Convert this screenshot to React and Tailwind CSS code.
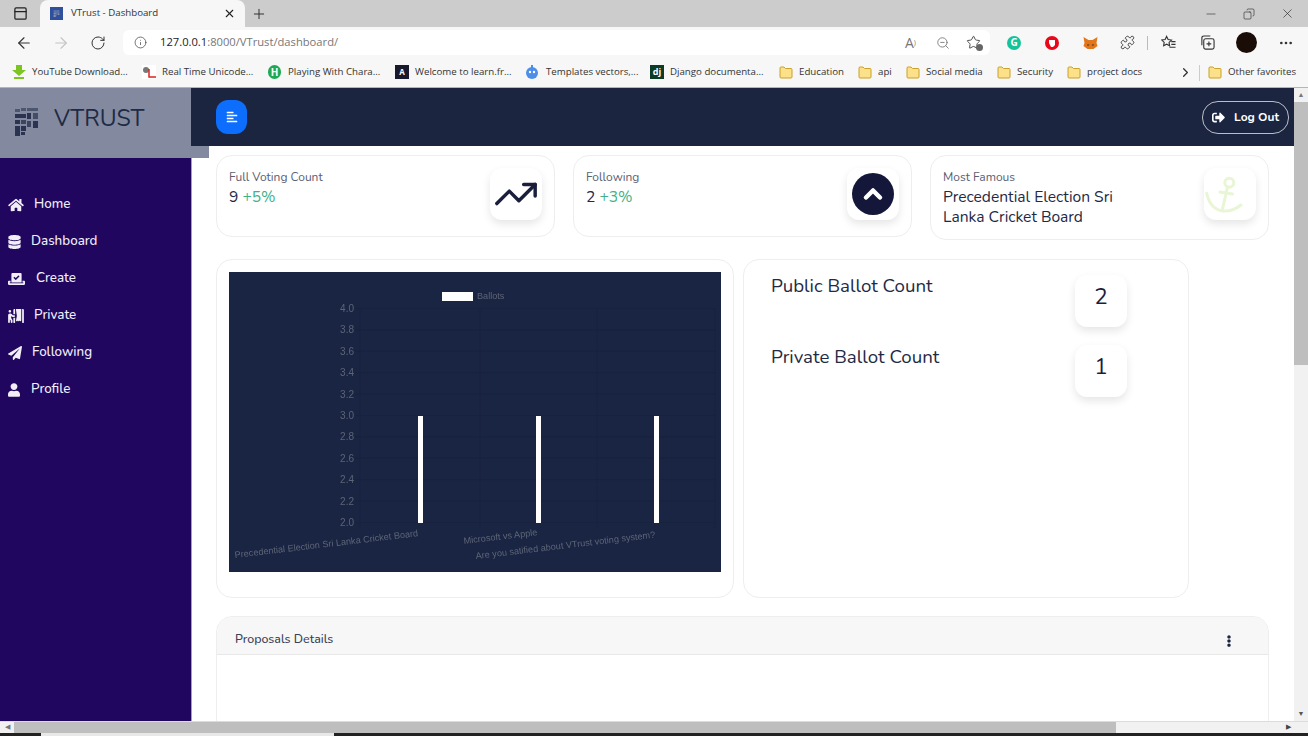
import { ArrowLeft, ArrowRight, RotateCw, Info, ZoomOut, Star, Puzzle, Ellipsis, Minus, Copy, X, Plus, ChevronRight, PanelTop, TrendingUp } from "lucide-react"
import { FaHome, FaDatabase, FaVoteYea, FaPersonBooth, FaPaperPlane, FaUser, FaSignOutAlt, FaEllipsisV, FaAlignLeft } from "react-icons/fa"

function Logo({ className }) {
    return <svg viewBox="0 0 23 28" className={className} fill="#2a3350">
        <rect x="0" y="1" width="5" height="3" opacity=".6" />
        <rect x="6" y="0" width="5" height="3" opacity=".6" />
        <rect x="12" y="0" width="11" height="3" opacity=".6" />
        <rect x="0" y="6" width="11" height="4" />
        <rect x="12" y="5" width="4" height="6" />
        <rect x="18" y="5" width="5" height="6" opacity=".7" />
        <rect x="0" y="12" width="5" height="4" />
        <rect x="6" y="12" width="5" height="4" opacity=".8" />
        <rect x="12" y="13" width="4" height="6" opacity=".8" />
        <rect x="18" y="13" width="5" height="7" />
        <rect x="0" y="18" width="5" height="10" />
        <rect x="6" y="18" width="5" height="5" />
        <rect x="6" y="24" width="4" height="3" />
    </svg>
}

function Folder() {
    return <svg viewBox="0 0 14 14" className="w-[14px] h-[14px] shrink-0">
        <path d="M1 3a1 1 0 0 1 1-1h3l1.5 1.5H12a1 1 0 0 1 1 1V12a1 1 0 0 1-1 1H2a1 1 0 0 1-1-1z" fill="#fce08a" stroke="#c9a227" />
    </svg>
}

function Bookmarks() {
    const text = "text-[9.7px] text-[#333] whitespace-nowrap"
    return <div className="h-[30px] bg-[#f7f7f7] flex items-center pl-[12px] relative border-b border-[#b5b5b5] font-['Open_Sans',sans-serif]">
        <div className="w-[130px] flex items-center gap-[6px]">
            <svg viewBox="0 0 14 14" className="w-[14px] h-[14px] shrink-0"><path d="M4 0h6v5h4l-7 6-7-6h4z" fill="#7cc521" /><rect x="2" y="12" width="10" height="2" fill="#7cc521" /></svg>
            <span className={text}>YouTube Download...</span>
        </div>
        <div className="w-[126px] flex items-center gap-[6px]">
            <svg viewBox="0 0 14 14" className="w-[14px] h-[14px] shrink-0"><rect width="14" height="14" fill="#fff" /><circle cx="4" cy="5" r="3" fill="#777" /><path d="M7 4v8h7" stroke="#d22" strokeWidth="1.5" fill="none" /></svg>
            <span className={text}>Real Time Unicode...</span>
        </div>
        <div className="w-[127px] flex items-center gap-[7px]">
            <span className="w-[13px] h-[14px] shrink-0 rounded-full bg-[#1fa855] text-white text-[10px] font-bold leading-[14px] text-center">H</span>
            <span className={text}>Playing With Chara...</span>
        </div>
        <div className="w-[130px] flex items-center gap-[6px]">
            <span className="w-[14px] h-[14px] shrink-0 bg-[#1a1a2e] text-white text-[8px] font-bold leading-[14px] text-center">A</span>
            <span className={text}>Welcome to learn.fr...</span>
        </div>
        <div className="w-[125px] flex items-center gap-[7px]">
            <svg viewBox="0 0 14 14" className="w-[14px] h-[14px] shrink-0"><circle cx="7" cy="8" r="6" fill="#4c8ee8" /><rect x="6" y="0" width="2" height="3" fill="#4c8ee8" /><circle cx="5" cy="7" r="1.2" fill="#fff" /><circle cx="9" cy="7" r="1.2" fill="#fff" /></svg>
            <span className={text}>Templates vectors,...</span>
        </div>
        <div className="w-[129px] flex items-center gap-[6px]">
            <span className="w-[14px] h-[14px] shrink-0 bg-[#0c3c26] text-white text-[9px] font-bold leading-[13px] text-center">dj</span>
            <span className={text}>Django documenta...</span>
        </div>
        <div className="w-[79px] flex items-center gap-[6px]"><Folder /><span className={text}>Education</span></div>
        <div className="w-[48px] flex items-center gap-[6px]"><Folder /><span className={text}>api</span></div>
        <div className="w-[91px] flex items-center gap-[6px]"><Folder /><span className={text}>Social media</span></div>
        <div className="w-[70px] flex items-center gap-[6px]"><Folder /><span className={text}>Security</span></div>
        <div className="w-[111px] flex items-center gap-[6px]"><Folder /><span className={text}>project docs</span></div>
        <ChevronRight className="w-[15px] h-[15px] text-[#333]" />
        <div className="w-px h-[16px] bg-[#ccc] ml-[6px] mr-[8px]" />
        <div className="flex items-center gap-[6px]"><Folder /><span className={text}>Other favorites</span></div>
    </div>
}

function BrowserChrome() {
    return <div className="shrink-0">
        <div className="h-[27px] bg-[#cccccc] flex items-end">
            <div className="w-[40px] h-[27px] flex items-center justify-center">
                <PanelTop className="w-[15px] h-[15px] text-[#222]" />
            </div>
            <div className="w-[205px] h-[27px] bg-[#f7f7f7] rounded-t-lg flex items-center pl-[10px] pr-[9px] font-['Open_Sans',sans-serif]">
                <span className="w-[13px] h-[13px] bg-[#2f4f9f] shrink-0 p-[3px]"><Logo className="w-full h-full opacity-60 invert" /></span>
                <span className="ml-[8px] text-[9.700px] text-[#333] flex-1">VTrust - Dashboard</span>
                <X className="w-[13px] h-[13px] text-[#222]" />
            </div>
            <div className="h-[27px] w-[28px] flex items-center justify-center">
                <Plus className="w-[16px] h-[16px] text-[#333]" strokeWidth={1.5} />
            </div>
            <div className="flex-1" />
            <div className="h-[27px] flex items-center text-[#222] pr-[13px] gap-[25px]">
                <Minus className="w-[14px] h-[14px]" strokeWidth={1} />
                <Copy className="w-[12px] h-[12px] -scale-x-100" strokeWidth={1.2} />
                <X className="w-[15px] h-[15px]" strokeWidth={1} />
            </div>
        </div>
        <div className="h-[31px] bg-[#f7f7f7] flex items-center pl-[15px]">
            <ArrowLeft className="w-[18px] h-[18px] text-[#333]" strokeWidth={1.5} />
            <ArrowRight className="w-[18px] h-[18px] text-[#c4c4c4] ml-[19px]" strokeWidth={1.5} />
            <RotateCw className="w-[16px] h-[16px] text-[#333] ml-[20px]" strokeWidth={1.5} />
            <div className="ml-[17px] w-[867px] h-[25px] bg-white rounded-md flex items-center pl-[11px] pr-[9px] font-['Open_Sans',sans-serif]">
                <Info className="w-[13px] h-[13px] text-[#555]" strokeWidth={1.5} />
                <span className="ml-[13px] text-[11.200px] text-[#777] flex-1"><span className="text-[#222]">127.0.0.1</span>:8000/VTrust/dashboard/</span>
                <span className="text-[14px] leading-[16px] text-[#777] w-[16px] whitespace-nowrap">A<span className="text-[7px] align-top">)</span></span>
                <ZoomOut className="w-[14px] h-[14px] text-[#777] ml-[15px]" strokeWidth={1.5} />
                <span className="relative ml-[16px]">
                    <Star className="w-[15px] h-[15px] text-[#444]" strokeWidth={1.5} />
                    <span className="absolute right-[-2px] bottom-[-1px] w-[7px] h-[7px] rounded-full bg-[#666]" />
                </span>
            </div>
            <div className="ml-[17px] w-[14px] h-[14px] rounded-full bg-[#15c39a] flex items-center justify-center text-white text-[10px] font-bold font-['Open_Sans',sans-serif]">G</div>
            <svg viewBox="0 0 14 14" className="ml-[24px] w-[14px] h-[14px]"><circle cx="7" cy="7" r="7" fill="#e8081a" /><path d="M4 7V4h6v5l-2 2H6z" fill="#fff" /></svg>
            <svg viewBox="0 0 14 14" className="ml-[24px] w-[15px] h-[14px]"><path d="M0 1l5 3h4l5-3-1 6 1 3-4 3H4l-4-3 1-3z" fill="#e2761b" /><path d="M4 8l2 1-2 1zM10 8L8 9l2 1z" fill="#333" /></svg>
            <Puzzle className="ml-[22px] w-[15px] h-[15px] text-[#333]" strokeWidth={1.5} />
            <div className="ml-[12px] w-px h-[14px] bg-[#bbb]" />
            <svg viewBox="0 0 16 16" className="ml-[13px] w-[15px] h-[15px]" fill="none" stroke="#333" strokeWidth="1.200"><path d="M6 1.500l1.600 3.400 3.600.5-2.600 2.500.6 3.600L6 9.800l-3.200 1.700.6-3.600L.8 5.400l3.600-.5zM11 7h4.500M11 10h4.500M9 13h6.500" /></svg>
            <svg viewBox="0 0 16 16" className="ml-[24px] w-[15px] h-[15px]" fill="none" stroke="#333" strokeWidth="1.2"><rect x="4" y="4" width="11" height="11" rx="2" /><path d="M2 11V3a2 2 0 0 1 2-2h7M9.500 7v5M7 9.500h5" /></svg>
            <div className="ml-[21px] w-[21px] h-[21px] rounded-full bg-[#1a0d08]" />
            <Ellipsis className="ml-[21px] w-[16px] h-[16px] text-[#333]" />
        </div>
        <Bookmarks />
    </div>
}

function NavItem({ icon, label, textClass }) {
    return <div className="h-[37px] pl-[8px] flex items-center text-[#f1eef8] text-[13.400px] font-medium">
        {icon}
        <span className={textClass}>{label}</span>
    </div>
}

function Sidebar() {
    return <div className="w-[191px] shrink-0 bg-[#20065f] shadow-[1px_0_0_#a79bc5]">
        <div className="w-[209px] h-[70px] bg-[#838a9f] flex items-start pl-[15px] pt-[20px]">
            <Logo className="w-[23px] h-[28px]" />
            <span className="ml-[16px] text-[23.200px] leading-[20px] mt-[1px] text-[#1f2a45]">VTRUST</span>
        </div>
        <div className="pt-[28px]">
            <NavItem icon={<FaHome className="w-[16px] h-[14px]" />} label="Home" textClass="ml-[10px]" />
            <NavItem icon={<FaDatabase className="w-[13px] h-[14px]" />} label="Dashboard" textClass="ml-[10px]" />
            <NavItem icon={<FaVoteYea className="w-[17px] h-[14px]" />} label="Create" textClass="ml-[11px]" />
            <NavItem icon={<FaPersonBooth className="w-[16px] h-[14px]" />} label="Private" textClass="ml-[10px]" />
            <NavItem icon={<FaPaperPlane className="w-[14px] h-[14px]" />} label="Following" textClass="ml-[10px]" />
            <NavItem icon={<FaUser className="w-[12px] h-[14px]" />} label="Profile" textClass="ml-[11px]" />
        </div>
    </div>
}

function IconBox({ children }) {
    return <div className="w-[52px] h-[52px] mt-px shrink-0 bg-white rounded-xl shadow-[0_4px_8px_rgba(0,0,0,0.1)] flex items-center justify-center">{children}</div>
}

function StatCard({ label, children, icon, className }) {
    return <div className={`${className} shrink-0 border border-[#eeeeee] rounded-2xl pl-[12px] pr-[12px] pt-[11px] flex justify-between items-start`}>
        <div>
            <div className="text-[12px] leading-[20px] text-[#5a6072]">{label}</div>
            {children}
        </div>
        {icon}
    </div>
}

function VoteChart() {
    const ticks = ["4.0", "3.8", "3.6", "3.4", "3.2", "3.0", "2.8", "2.6", "2.4", "2.2", "2.0"]
    return <div className="w-[492px] h-[300px] bg-[#1a2544]">
        <svg viewBox="0 0 492 300" className="w-full h-full blur-[0.3px]" fontFamily="'Liberation Sans', sans-serif" fontSize="9.150" fill="#5d6474">
            <rect x="213" y="20" width="31" height="9" fill="#fff" />
            <text x="248" y="26.500">Ballots</text>
            {ticks.map((t, i) => {
                const y = 36.5 + i * 21.4
                return <g key={t}>
                    <line x1="126" x2="487" y1={y} y2={y} stroke="#18223e" />
                    <text x="125" y={y + 3.5} textAnchor="end" fontSize="10">{t}</text>
                </g>
            })}
            {[131, 251, 368, 486].map((x) => <line key={x} x1={x} x2={x} y1="36" y2="256" stroke="#18223e" />)}
            <rect x="189" y="144" width="5" height="107" fill="#fff" />
            <rect x="307" y="144" width="5" height="107" fill="#fff" />
            <rect x="425" y="144" width="5" height="107" fill="#fff" />
            <text transform="translate(6 286) rotate(-6.800)">Precedential Election Sri Lanka Cricket Board</text>
            <text transform="translate(235 272) rotate(-6.800)">Microsoft vs Apple</text>
            <text transform="translate(247 287) rotate(-6.800)">Are you satified about VTrust voting system?</text>
        </svg>
    </div>
}

function CountRow({ label, value, className, labelClass }) {
    return <div className={`${className} flex justify-between pl-[27px] pr-[61px]`}>
        <span className={`${labelClass} text-[18.700px] leading-[24px] text-[#1f2a45]`}>{label}</span>
        <div className="w-[52px] h-[52px] pb-[8px] bg-white rounded-xl shadow-[0_4px_8px_rgba(0,0,0,0.1)] flex items-center justify-center text-[22.500px] text-[#1a1f3d]">{value}</div>
    </div>
}

function Content() {
    return <div className="flex-1 min-w-0 overflow-hidden">
        <div className="h-[58px] bg-[#1b2540] flex items-center justify-between pl-[25px] pr-[5px]">
            <div className="w-[31px] h-[34px] bg-[#0d6efd] rounded-xl flex items-center justify-center">
                <FaAlignLeft className="w-[12px] h-[12px] text-white" />
            </div>
            <div className="w-[87px] h-[33px] border border-white/70 rounded-2xl flex items-center justify-center gap-[9px] text-white text-[12px] font-bold">
                <FaSignOutAlt className="w-[13px] h-[13px]" />
                Log Out
            </div>
        </div>
        <div className="pl-[25px] pt-[9px]">
            <div className="flex items-start">
                <StatCard label="Full Voting Count" className="w-[339px] h-[82px]" icon={<IconBox><TrendingUp className="w-[46px] h-[46px] text-[#1a1f3d]" strokeWidth={1.8} /></IconBox>}>
                    <div className="text-[15.600px] leading-[20px] text-[#1f2a45]">9 <span className="text-[#3fb08a]">+5%</span></div>
                </StatCard>
                <StatCard label="Following" className="w-[339px] h-[82px] ml-[18px]" icon={
                    <IconBox>
                        <svg viewBox="0 0 42 42" className="w-[42px] h-[42px]">
                            <circle cx="21" cy="21" r="21" fill="#14163a" />
                            <path d="M14 24.500L21 17.500 28 24.500" fill="none" stroke="#fff" strokeWidth="4.500" strokeLinecap="round" strokeLinejoin="round" />
                        </svg>
                    </IconBox>
                }>
                    <div className="text-[15.600px] leading-[20px] text-[#1f2a45]">2 <span className="text-[#3fb08a]">+3%</span></div>
                </StatCard>
                <StatCard label="Most Famous" className="w-[339px] h-[85px] ml-[18px]" icon={
                    <IconBox>
                        <svg viewBox="0 0 52 52" className="w-[52px] h-[52px]" fill="none" stroke="#e8f6d6" strokeWidth="3" strokeLinecap="round">
                            <circle cx="25.300" cy="14.700" r="4.500" />
                            <path d="M23.500 19L18.500 41M16 24L28.500 26M2.700 25.300C5 36 11 42 19 43C25 43.500 32 41 37 37" />
                        </svg>
                    </IconBox>
                }>
                    <div className="text-[15.600px] leading-[20px] text-[#1f2a45] w-[200px]">Precedential Election Sri Lanka Cricket Board</div>
                </StatCard>
            </div>
            <div className="flex items-start mt-[19px]">
                <div className="w-[518px] h-[339px] border border-[#eeeeee] rounded-2xl p-[12px]">
                    <VoteChart />
                </div>
                <div className="w-[446px] h-[339px] ml-[9px] border border-[#eeeeee] rounded-2xl pt-[15px]">
                    <CountRow label="Public Ballot Count" value="2" labelClass="mt-[-1px]" />
                    <CountRow label="Private Ballot Count" value="1" className="mt-[18px]" />
                </div>
            </div>
            <div className="w-[1053px] mt-[18px] h-[200px] border border-[#eeeeee] rounded-t-2xl overflow-hidden">
                <div className="h-[38px] bg-[#f7f7f7] border-b border-[#e8e8e8] flex items-center justify-between pt-[8px] pl-[18px] pr-[34px]">
                    <span className="text-[12.400px] font-medium text-[#3a4156]">Proposals Details</span>
                    <FaEllipsisV className="w-[10px] h-[12px] mt-[3px] text-[#1b2540]" />
                </div>
            </div>
        </div>
    </div>
}

export default function App() {
    return <div className="w-[1308px] h-[736px] flex flex-col overflow-hidden bg-white font-['Nunito','Lato',sans-serif]">
        <BrowserChrome />
        <div className="h-[633px] flex shrink-0">
            <Sidebar />
            <Content />
            <div className="w-[14px] shrink-0 bg-[#f1f1f1] flex flex-col items-center relative">
                <div className="h-[14px] text-[7px] leading-[14px] text-[#777]">▲</div>
                <div className="w-full h-[263px] bg-[#bebebe]" />
                <div className="mt-auto h-[14px] text-[7px] leading-[14px] text-[#555]">▼</div>
            </div>
        </div>
        <div className="h-[12px] shrink-0 bg-[#f1f1f1] flex items-center border-t border-[#dcdcdc]">
            <div className="w-[14px] text-[7px] text-center text-[#777]">◀</div>
            <div className="w-[1102px] h-full bg-[#bebebe]" />
            <div className="ml-auto mr-[17px] text-[7px] text-[#444]">▶</div>
        </div>
        <div className="h-[3px] shrink-0 bg-[#222] pl-[41px]">
            <div className="w-[293px] h-full bg-[#e8e8e8]" />
        </div>
    </div>
}
